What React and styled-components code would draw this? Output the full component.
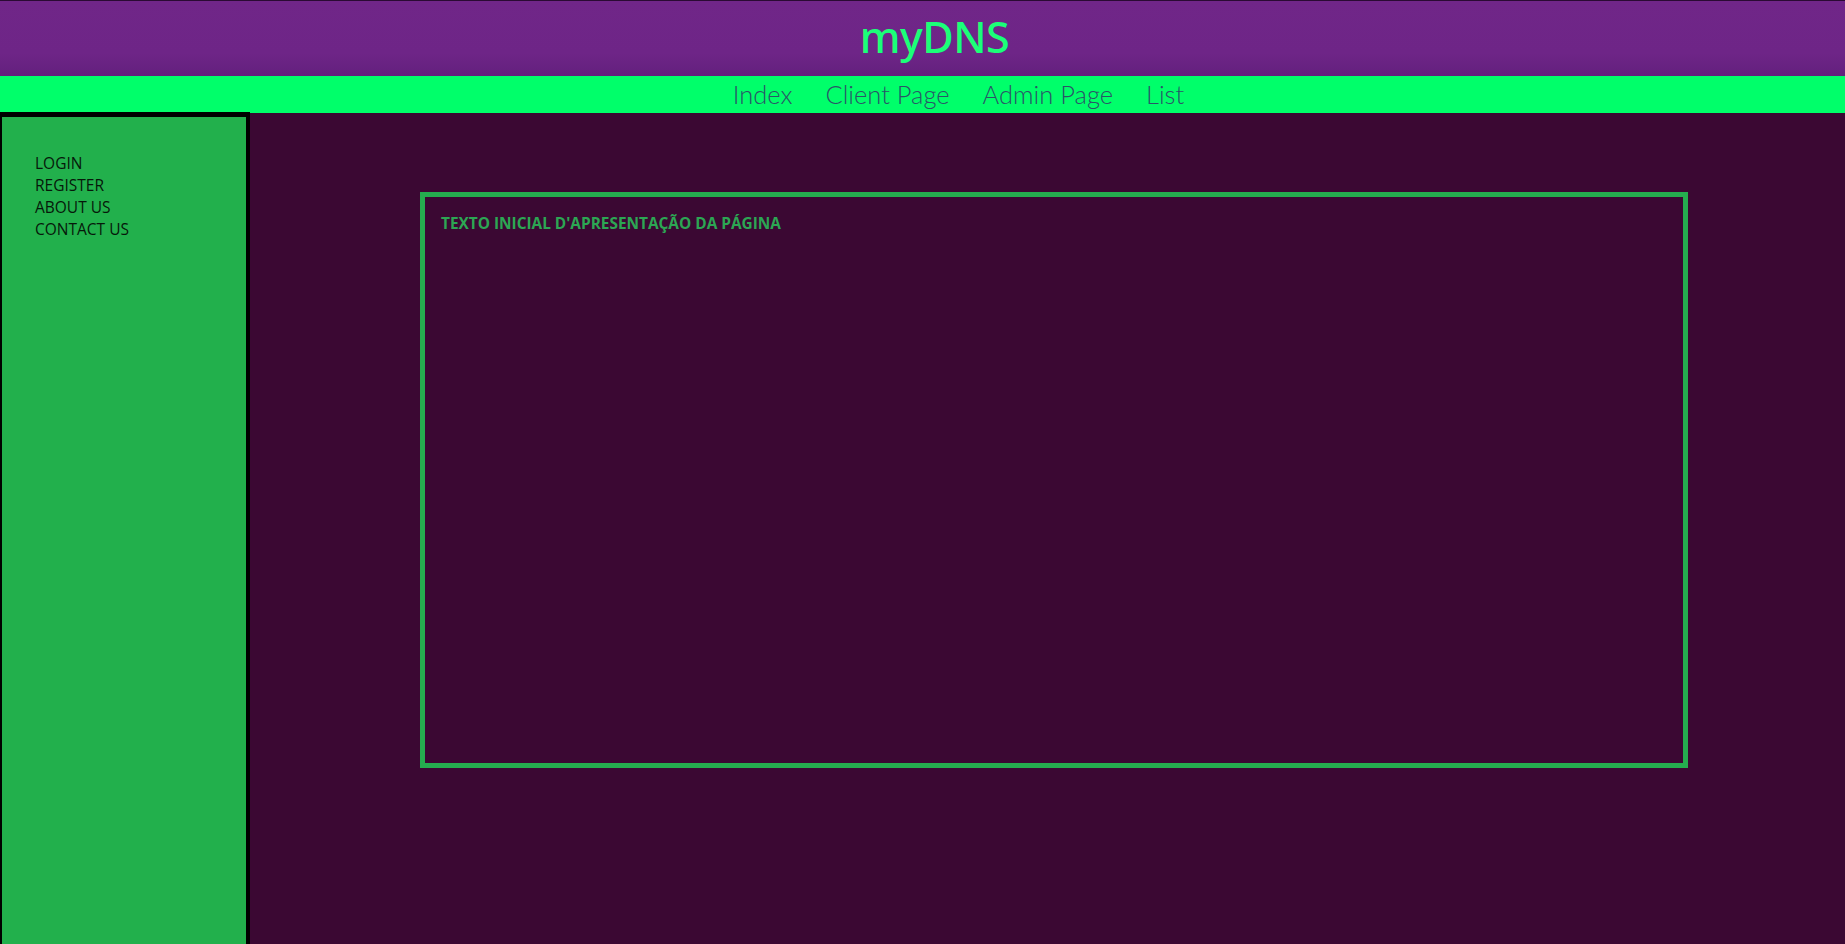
import React from 'react'
import styled, { createGlobalStyle } from 'styled-components'

const Global = createGlobalStyle`
  html, body {
    margin: 0;
    padding: 0;
    height: 100%;
    background: #3b0833;
  }
  #root {
    min-height: 100%;
  }
`

const Page = styled.div`
  display: flex;
  flex-direction: column;
  height: 944px;
  overflow: hidden;
  background: #3b0833;
`

const Header = styled.header`
  height: 75px;
  border-top: 1px solid #2a0a33;
  background: linear-gradient(#702688 0%, #6e2587 70%, #63207d 100%);
  display: flex;
  justify-content: center;
  align-items: center;
  padding-left: 24px;
`

const Title = styled.h1`
  margin: 0;
  padding-bottom: 4px;
  font-family: "Noto Sans", "Open Sans", sans-serif;
  font-weight: 500;
  font-size: 43px;
  letter-spacing: -0.5px;
  color: #1bff78;
`

const Nav = styled.nav`
  height: 37px;
  background: #00ff6a;
  display: flex;
  justify-content: center;
  align-items: center;
  gap: 33px;
  padding-left: 72px;
`

const NavLink = styled.a`
  font-family: Lato, "Open Sans", sans-serif;
  font-weight: 300;
  font-size: 25.5px;
  color: #2b5468;
  text-decoration: none;
  line-height: 1;
`

const Body = styled.div`
  flex: 1;
  display: flex;
  margin-top: -1px;
`

const Sidebar = styled.aside`
  flex: none;
  width: 250px;
  box-sizing: border-box;
  background: #22b04c;
  border: solid #000;
  border-width: 5px 4px 0 2px;
  padding: 35px 0 0 33px;
`

const Menu = styled.ul`
  list-style: none;
  margin: 0;
  padding: 0;
`

const MenuItem = styled.li`
  font-family: "Open Sans", sans-serif;
  font-size: 15.5px;
  line-height: 22px;
  color: #06180a;
`

const Main = styled.main`
  flex: 1;
  padding: 80px 157px 0 170px;
`

const Panel = styled.section`
  height: 576px;
  box-sizing: border-box;
  border: 5px solid #25ad4f;
  padding: 17px 16px;
`

const PanelText = styled.p`
  margin: 0;
  font-family: "Open Sans", sans-serif;
  font-weight: 700;
  font-size: 15.4px;
  line-height: 20px;
  color: #2ca653;
`

const links = ['Index', 'Client Page', 'Admin Page', 'List']
const menu = ['LOGIN', 'REGISTER', 'ABOUT US', 'CONTACT US']

export default function App() {
  return (
    <Page>
      <Global />
      <Header>
        <Title>myDNS</Title>
      </Header>
      <Nav>
        {links.map((l) => (
          <NavLink key={l} href="#">{l}</NavLink>
        ))}
      </Nav>
      <Body>
        <Sidebar>
          <Menu>
            {menu.map((m) => (
              <MenuItem key={m}>{m}</MenuItem>
            ))}
          </Menu>
        </Sidebar>
        <Main>
          <Panel>
            <PanelText>TEXTO INICIAL D'APRESENTAÇÃO DA PÁGINA</PanelText>
          </Panel>
        </Main>
      </Body>
    </Page>
  )
}
